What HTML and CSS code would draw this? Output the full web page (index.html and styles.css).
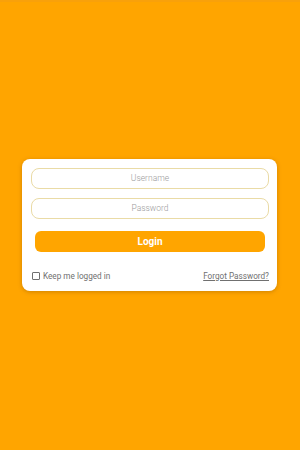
FILE: index.html
```html
<!DOCTYPE html>
<html>
<head>
<meta charset="utf-8">
<link rel="stylesheet" href="styles.css">
</head>
<body>
<div class="topbar"></div>
<div class="page">
  <div class="card">
    <input class="field" type="text" placeholder="Username">
    <input class="field" type="password" placeholder="Password">
    <button class="login">Login</button>
    <div class="bottom">
      <label class="keep"><span class="box"></span>Keep me logged in</label>
      <a class="forgot" href="#">Forgot Password?</a>
    </div>
  </div>
</div>
</body>
</html>
```
FILE: styles.css
```css
html, body {
  margin: 0;
  padding: 0;
  height: 100%;
}
body {
  background: #ffa500;
  font-family: Roboto, "Liberation Sans", sans-serif;
  position: relative;
}
.topbar {
  position: absolute;
  top: 0;
  left: 0;
  right: 0;
  height: 2px;
  background: #f9a10a;
}
.page {
  height: 450px;
  display: flex;
  align-items: center;
  justify-content: center;
}
.card {
  width: 255px;
  box-sizing: border-box;
  background: #fff;
  border-radius: 8px;
  box-shadow: 0 1px 4px rgba(120, 70, 0, 0.35);
  padding: 9px 8px 10px 9px;
  display: flex;
  flex-direction: column;
  margin-left: -1px;
  margin-top: -1px;
}
.field {
  height: 21px;
  box-sizing: border-box;
  border: 1px solid #eadba6;
  border-radius: 8px;
  text-align: center;
  font-family: Roboto, "Liberation Sans", sans-serif;
  font-weight: 300;
  font-size: 8.5px;
  color: #555;
  outline: none;
  margin-bottom: 9px;
  background: #fff;
}
.field::placeholder {
  color: #9a9a9a;
}
.login {
  margin: 3px 4px 0 4px;
  height: 21px;
  border: none;
  border-radius: 6px;
  background: #ffa500;
  color: #fff;
  font-family: Roboto, "Liberation Sans", sans-serif;
  font-weight: bold;
  font-size: 10px;
}
.bottom {
  display: flex;
  justify-content: space-between;
  align-items: center;
  margin-top: 19px;
  font-size: 8.2px;
  color: #707070;
}
.keep {
  display: flex;
  align-items: center;
  gap: 3px;
}
.box {
  width: 6px;
  height: 6px;
  border: 1px solid #707070;
  border-radius: 1px;
  margin-left: 1px;
}
.forgot {
  color: #707070;
  text-decoration: underline;
}
```
